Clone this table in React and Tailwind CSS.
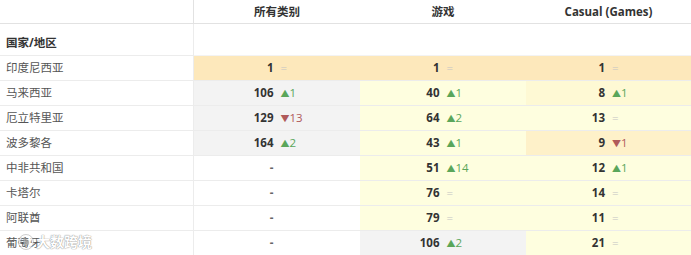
import React from 'react'

const ORANGE = 'bg-[#fde8bb]'
const YELLOW = 'bg-[#fefedf]'
const YELLOW2 = 'bg-[#fef9d4]'
const YELLOW3 = 'bg-[#fef1c9]'
const GRAY = 'bg-[#f3f3f3]'
const WHITE = 'bg-white'

const rows = [
  {
    name: '印度尼西亚',
    cells: [
      { v: '1', d: '=', bg: ORANGE },
      { v: '1', d: '=', bg: ORANGE },
      { v: '1', d: '=', bg: ORANGE },
    ],
  },
  {
    name: '马来西亚',
    cells: [
      { v: '106', d: 'up', n: '1', bg: GRAY },
      { v: '40', d: 'up', n: '1', bg: YELLOW },
      { v: '8', d: 'up', n: '1', bg: YELLOW2 },
    ],
  },
  {
    name: '厄立特里亚',
    cells: [
      { v: '129', d: 'down', n: '13', bg: GRAY },
      { v: '64', d: 'up', n: '2', bg: YELLOW },
      { v: '13', d: '=', bg: YELLOW },
    ],
  },
  {
    name: '波多黎各',
    cells: [
      { v: '164', d: 'up', n: '2', bg: GRAY },
      { v: '43', d: 'up', n: '1', bg: YELLOW },
      { v: '9', d: 'down', n: '1', bg: YELLOW3 },
    ],
  },
  {
    name: '中非共和国',
    cells: [
      { v: '-', bg: WHITE },
      { v: '51', d: 'up', n: '14', bg: YELLOW },
      { v: '12', d: 'up', n: '1', bg: YELLOW },
    ],
  },
  {
    name: '卡塔尔',
    cells: [
      { v: '-', bg: WHITE },
      { v: '76', d: '=', bg: YELLOW },
      { v: '14', d: '=', bg: YELLOW },
    ],
  },
  {
    name: '阿联酋',
    cells: [
      { v: '-', bg: WHITE },
      { v: '79', d: '=', bg: YELLOW },
      { v: '11', d: '=', bg: YELLOW },
    ],
  },
  {
    name: '葡萄牙',
    cells: [
      { v: '-', bg: WHITE },
      { v: '106', d: 'up', n: '2', bg: GRAY },
      { v: '21', d: '=', bg: YELLOW },
    ],
  },
]

function Delta({ d, n }) {
  if (d === 'up')
    return (
      <span className="text-[#5aa65a]">
        <span className="text-[9px]">▲</span>
        {n}
      </span>
    )
  if (d === 'down')
    return (
      <span className="text-[#b05a5a]">
        <span className="text-[9px]">▼</span>
        {n}
      </span>
    )
  if (d === '=') return <span className="text-[#c4c4c4]">=</span>
  return null
}

function Cell({ v, d, n, bg }) {
  return (
    <div className={`flex items-center h-full border-b border-[#ececec] ${bg}`}>
      <div className={`flex-1 text-right pr-[4px] font-bold ${v === '-' ? 'text-[#666]' : 'text-[#333]'}`}>
        {v}
      </div>
      <div className="flex-1 pl-[3px]">
        <Delta d={d} n={n} />
      </div>
    </div>
  )
}

export default function App() {
  return (
    <div
      className="relative w-[691px] h-[255px] overflow-hidden bg-white text-[11.5px] text-[#333]"
      style={{ fontFamily: '"Open Sans", "Noto Sans CJK SC", sans-serif' }}
    >
      <div className="grid grid-cols-[194px_166px_166px_165px] grid-rows-[24px_32px_repeat(8,25px)]">
        <div className="border-r border-b border-[#e2e2e2]" />
        <div className="flex items-center justify-center font-bold border-b border-[#e2e2e2]">所有类别</div>
        <div className="flex items-center justify-center font-bold border-b border-[#e2e2e2]">游戏</div>
        <div className="flex items-center justify-center font-bold border-b border-[#e2e2e2]">Casual (Games)</div>

        <div className="flex items-end pb-[4px] pl-[6px] font-bold border-r border-b border-[#ececec]">国家/地区</div>
        <div className="col-span-3 border-b border-[#f3f3f3]" />

        {rows.map((r) => (
          <React.Fragment key={r.name}>
            <div className="flex items-center pl-[6px] text-[#555] border-r border-b border-[#ececec]">{r.name}</div>
            {r.cells.map((c, i) => (
              <Cell key={i} {...c} />
            ))}
          </React.Fragment>
        ))}
      </div>

      {/* watermark */}
      <div className="absolute left-[18px] top-[231px] flex items-center gap-[2px] text-white text-[14px] font-bold opacity-80 [text-shadow:0_0_1px_#777,0_0_1px_#777]">
        <svg width="16" height="16" viewBox="0 0 16 16">
          <circle cx="8" cy="8" r="6.5" fill="none" stroke="#fff" strokeWidth="1.5" />
          <circle cx="8" cy="8" r="7.5" fill="none" stroke="#999" strokeWidth="0.6" />
          <text x="8" y="11" textAnchor="middle" fontSize="8" fill="#fff" stroke="#888" strokeWidth="0.3">b</text>
        </svg>
        <span>大数跨境</span>
      </div>
    </div>
  )
}
